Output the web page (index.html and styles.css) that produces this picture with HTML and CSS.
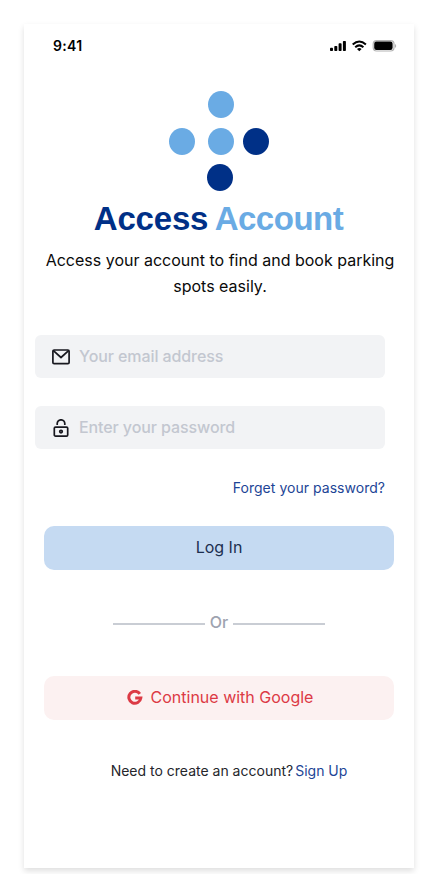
FILE: index.html
```html
<!DOCTYPE html>
<html lang="en">
<head>
<meta charset="utf-8">
<meta name="viewport" content="width=device-width, initial-scale=1">
<title>Access Account</title>
<link rel="stylesheet" href="styles.css">
</head>
<body>
<main class="screen">
  <div class="status-bar">
    <span class="time">9:41</span>
    <svg class="status-icons" width="68" height="12" viewBox="0 0 68 12">
      <rect x="0" y="7.7" width="3" height="3.3" rx=".8"/>
      <rect x="4.3" y="6" width="3" height="5" rx=".8"/>
      <rect x="8.6" y="3.2" width="3" height="7.8" rx=".8"/>
      <rect x="12.9" y="1" width="3" height="10" rx=".8"/>
      <g fill="none" stroke="#000" stroke-width="2">
        <path d="M22.7 4.6Q29.3-1.5 35.9 4.6"/>
        <path d="M25.2 7.2Q29.3 3.6 33.4 7.2"/>
      </g>
      <path d="M27 8.9Q29.3 7.2 31.6 8.9L29.3 11.2Z"/>
      <rect x="43.2" y=".6" width="20.8" height="10.4" rx="3.4" fill="none" stroke="#b3b3b3" stroke-width="1.2"/>
      <rect x="44.2" y="1.6" width="18.4" height="8.4" rx="2.2"/>
      <path d="M65 4v3.8q1.2-.6 1.2-1.9T65 4Z" fill="#b3b3b3"/>
    </svg>
  </div>
  <svg class="logo" width="100" height="100" viewBox="0 0 100 100">
    <g fill="#6aabe4">
      <ellipse cx="52" cy="13.5" rx="13" ry="13.5"/>
      <ellipse cx="13" cy="50.5" rx="13" ry="13.5"/>
      <ellipse cx="52" cy="50.5" rx="13" ry="13.5"/>
    </g>
    <g fill="#003087">
      <ellipse cx="87" cy="50.5" rx="13" ry="13.5"/>
      <ellipse cx="51" cy="86.5" rx="13" ry="13.5"/>
    </g>
  </svg>
  <h1 class="title">Access <span class="title-accent">Account</span></h1>
  <p class="subtitle">Access your account to find and book parking spots easily.</p>
  <form class="form">
    <label class="field">
      <svg width="18" height="18" viewBox="0 0 18 18">
        <rect x=".9" y="2" width="16.2" height="13.6" rx="1.2"/>
        <path d="M1.4 2.7 9 9.5l7.6-6.8"/>
      </svg>
      <input type="email" placeholder="Your email address">
    </label>
    <label class="field">
      <svg width="18" height="18" viewBox="0 0 18 18">
        <rect x="2.3" y="8.1" width="13.4" height="9" rx="1.2"/>
        <path d="M5.2 6V4.6a3.8 3.8 0 0 1 7.6 0V6"/>
        <circle cx="9" cy="12.6" r="1.3"/>
      </svg>
      <input type="password" placeholder="Enter your password">
    </label>
    <a class="forgot">Forget your password?</a>
    <button class="button login" type="button"><span>Log In</span></button>
  </form>
  <div class="divider"><span>Or</span></div>
  <button class="button google" type="button">
    <svg width="16" height="16" viewBox="0 0 16 16">
      <path d="M12.8 3.9A6 6 0 1 0 13.8 8.1H8.2" fill="none" stroke="#dc3a45" stroke-width="3"/>
    </svg>
    <span>Continue with Google</span>
  </button>
  <p class="signup">Need to create an account?<a>Sign Up</a></p>
</main>
</body>
</html>
```
FILE: styles.css
```css
* { box-sizing: border-box; }

body {
  margin: 0;
  padding: 24px;
  background: #fff;
  font-family: Inter, "Liberation Sans", sans-serif;
}

.screen {
  display: flex;
  flex-direction: column;
  width: 390px;
  height: 844px;
  padding: 0 20px;
  background: #fff;
  box-shadow: 0 3px 6px rgba(0, 0, 0, .13);
}

.status-bar {
  display: flex;
  justify-content: space-between;
  align-items: center;
  height: 44px;
}

.time {
  margin: 0 0 1px 9px;
  font-size: 14px;
  font-weight: 600;
  letter-spacing: .3px;
}

.status-icons { margin-right: -4px; }

.logo { margin: 23px 0 0 125px; }

.title {
  margin: 9px 0 0;
  padding-right: 1px;
  height: 38px;
  font: bold 33px/38px "Liberation Sans", sans-serif;
  letter-spacing: -.2px;
  word-spacing: -2.5px;
  text-align: center;
  white-space: nowrap;
  color: #003087;
}

.title-accent {
  letter-spacing: -.5px;
  color: #6aabe4;
}

.subtitle {
  margin: 9px -5px 0;
  padding: 0 4px 0 6px;
  font-size: 16px;
  line-height: 26px;
  text-align: center;
  color: #0a0a0a;
}

.form {
  display: flex;
  flex-direction: column;
  margin-top: 36.4px;
}

.field {
  display: flex;
  align-items: center;
  gap: 9px;
  width: 349.4px;
  height: 43px;
  margin: 0 0 28px -8.6px;
  padding: 0 0 0 16.6px;
  border-radius: 6px;
  background: #f2f3f5;
}

.field svg {
  fill: none;
  stroke: #18181f;
  stroke-width: 1.7;
  stroke-linejoin: round;
}

.field input {
  width: 260px;
  padding: 0 0 1px;
  border: 0;
  outline: 0;
  background: none;
  font: 500 16px/24px Inter, sans-serif;
  letter-spacing: -.09px;
}

.field input::placeholder { color: #c3c7d0; opacity: 1; }

.forgot {
  align-self: flex-end;
  margin: -.4px 9px 0 0;
  font-size: 14px;
  line-height: 22px;
  letter-spacing: .03px;
  color: #1d4596;
}

.button {
  display: flex;
  align-items: center;
  justify-content: center;
  width: 350px;
  height: 44px;
  padding: 0;
  border: 0;
  border-radius: 10px;
  font: 400 16px/24px Inter, sans-serif;
}

.button span { margin-bottom: 2px; }

.login {
  margin-top: 27px;
  background: #c5daf2;
  color: #1c2f50;
}

.divider {
  display: flex;
  align-items: center;
  justify-content: center;
  gap: 5px;
  height: 24px;
  margin-top: 41px;
  font-size: 16px;
  font-weight: 500;
  color: #9ea3b0;
}

.divider span { margin-bottom: 2px; }

.divider::before,
.divider::after {
  content: "";
  width: 92px;
  height: 2px;
  margin-top: 2px;
  background: #c9cdd4;
}

.google {
  gap: 8px;
  margin-top: 41px;
  padding-left: 2px;
  background: #fcf1f1;
  color: #dc3a45;
}

.signup {
  margin: 40px 0 0 20px;
  font-size: 14px;
  line-height: 22px;
  text-align: center;
  color: #25262b;
}

.signup a { margin-left: 2px; color: #1d4596; }
```
